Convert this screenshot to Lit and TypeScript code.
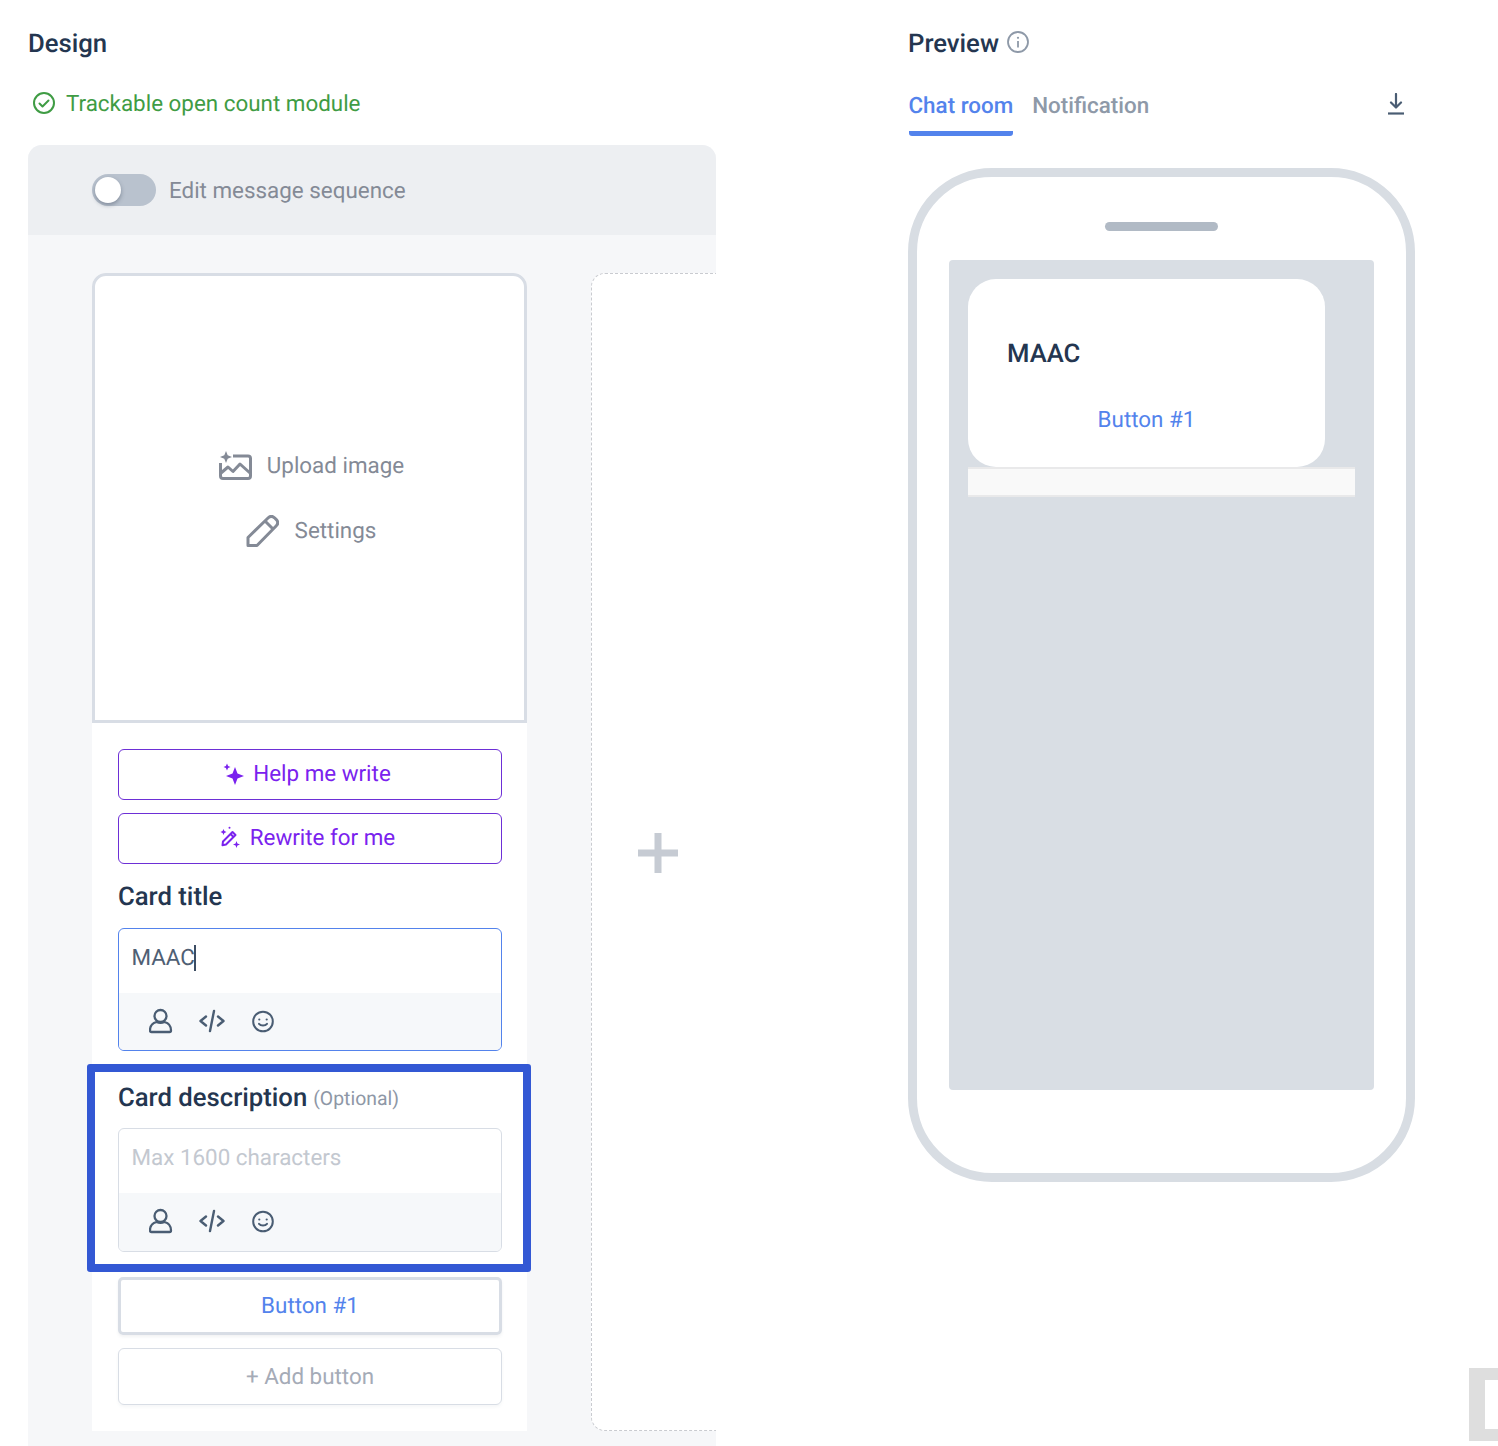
import { LitElement, html, css } from "lit";
import { customElement } from "lit/decorators.js";

const toolbar = html`<div class="toolbar">
  <svg width="24" height="26" viewBox="0 0 24 26" fill="none" stroke="#4a5d73" stroke-width="2.300" stroke-linejoin="round"><circle cx="11.500" cy="8" r="6"/><path d="M1 22.500c0-4 2.500-7.500 6.500-8.500 2.500 1 5.500 1 8 0 4 1 6.500 4.500 6.500 8.500 0 1-.5 1.500-1.500 1.500h-18c-1 0-1.500-.5-1.500-1.500z"/></svg>
  <svg width="26" height="24" viewBox="0 0 26 24" fill="none" stroke="#4a5d73" stroke-width="2.400" stroke-linecap="round" stroke-linejoin="round" class="code"><path d="M7 7.500L1.500 12 7 16.500M19 7.500l5.500 4.500-5.500 4.500M15 2L11 22"/></svg>
  <svg width="24" height="24" viewBox="0 0 24 24" fill="none" stroke="#4a5d73" stroke-width="2" stroke-linecap="round"><circle cx="12" cy="12.500" r="9.800"/><circle cx="8.300" cy="10.500" r="1.100" fill="#4a5d73" stroke="none"/><circle cx="15.700" cy="10.500" r="1.100" fill="#4a5d73" stroke="none"/><path d="M8 14.800c1.800 2.200 6.200 2.200 8 0"/></svg>
</div>`;

@customElement("app-root")
export class AppRoot extends LitElement {
  static styles = css`
    :host { display: block; font-family: Roboto, "Liberation Sans", sans-serif; text-rendering: geometricPrecision; }
    * { box-sizing: border-box; }
    .page { display: flex; width: 1498px; height: 1446px; overflow: hidden; position: relative; background: #fff; }
    .left { width: 688px; margin-left: 28px; flex: none; display: flex; flex-direction: column; }
    .right { width: 507px; margin-left: 192px; flex: none; }
    h2 { margin: 0; font-size: 25.700px; font-weight: 500; color: #243650; line-height: 34px; padding-top: 2px; }
    .heading { padding-top: 26px; display: flex; align-items: center; gap: 8px; height: 60px; }
    .status { margin-top: 27px; height: 32px; display: flex; align-items: center; gap: 11px; padding-left: 5px; color: #3f9c44; font-size: 22.400px; line-height: 34px; }
    .status span, .panel-head span { padding-top: 2px; }
    .panel { margin-top: 26px; flex: 1; display: flex; flex-direction: column; overflow: hidden; border-radius: 14px 14px 0 0; background: #f6f7f9; position: relative; }
    .panel-head { height: 90px; flex: none; background: #edeff2; display: flex; align-items: center; padding-left: 64px; gap: 13px; color: #848a96; font-size: 22.400px; }
    .toggle { width: 64px; height: 32px; border-radius: 16px; background: #b9c2ce; padding: 3px; display: flex; align-items: center; }
    .knob { width: 26px; height: 26px; border-radius: 50%; background: #fff; box-shadow: 0 2px 4px rgba(60,70,90,.45); }
    .panel-body { display: flex; padding: 38px 0 15px 64px; gap: 64px; flex: 1; }
    .card { width: 435px; flex: none; background: #fff; display: flex; flex-direction: column; border-radius: 14px 14px 0 0; }
    .image { height: 450px; flex: none; border: 3px solid #d8dde5; border-radius: 14px 14px 0 0; display: flex; flex-direction: column; align-items: center; justify-content: center; gap: 33px; color: #848a96; font-size: 22.400px; }
    .image-row { height: 32px; display: flex; align-items: center; gap: 15px; margin-left: 4px; }
    .image-row.settings { gap: 16px; margin-left: 3px; }
    .form { padding: 26px 25px 26px 26px; display: flex; flex-direction: column; }
    .ai { height: 51px; border: 1px solid #6d2fd6; border-radius: 6px; color: #7a22ee; display: flex; align-items: center; justify-content: center; gap: 9px; font-size: 22.400px; padding: 0 6px 2px 0; }
    .ai + .ai { margin-top: 13px; }
    .label { margin: 16px 0 16px; height: 32px; display: flex; align-items: center; gap: 6px; font-size: 25.700px; font-weight: 500; color: #243650; padding-top: 2px; }
    .label small { font-size: 19.400px; font-weight: 400; color: #8e97a6; }
    .editor { border: 1px solid #d8dde5; border-radius: 6px; overflow: hidden; display: flex; flex-direction: column; height: 124px; }
    .editor.active { border-color: #5383ec; height: 123px; }
    .text { height: 64px; flex: none; padding: 0 12.500px 6px; display: flex; align-items: center; font-size: 22.400px; }
    .active .text { color: #4f6074; }
    .caret { display: inline-block; width: 2px; height: 26px; background: #3c4d63; margin-left: -1px; }
    .placeholder { color: #c3c8d0; }
    .toolbar { flex: 1; background: #f6f8fa; display: flex; align-items: center; gap: 26px; padding: 0 0 2px 30px; }
    .title2 { margin-top: 30px; margin-bottom: 15px; }
    .btn { height: 58px; margin-top: 25px; border: 3px solid #d8dde5; border-radius: 5px; display: flex; align-items: center; justify-content: center; color: #5383ec; font-size: 22.400px; box-shadow: 0 2px 3px rgba(90,100,120,.08); }
    .add { height: 57px; margin-top: 13px; border: 1px solid #d8dde5; border-radius: 6px; display: flex; align-items: center; justify-content: center; color: #a5abb7; font-size: 22.400px; box-shadow: 0 2px 3px rgba(90,100,120,.06); }
    .next { width: 435px; flex: none; background: #fff; border: 1px dashed #c9cbd0; border-radius: 14px; display: flex; align-items: center; padding: 2px 0 0 46px; }
    .highlight { position: absolute; left: 87px; top: 1064px; width: 444px; height: 208px; border: 8px solid #3358d4; border-radius: 3px; }
    .tabs { margin-top: 29px; height: 46px; padding-left: 0.500px; display: flex; gap: 19px; font-size: 22.400px; font-weight: 500; color: #8e99a8; }
    .tab { height: 47px; padding-top: 2px; line-height: 31px; }
    .tab.on { color: #5383ec; border-bottom: 5px solid #5383ec; border-radius: 0 0 3px 3px; }
    .tools { margin-left: auto; margin-right: 10px; padding-top: 4px; }
    .phone { margin-top: 33px; width: 507px; height: 1014px; border: 9px solid #d8dde3; border-radius: 84px; display: flex; flex-direction: column; align-items: center; }
    .notch { width: 113px; height: 9px; border-radius: 5px; background: #b1bac5; margin-top: 45px; }
    .screen { width: 425px; height: 830px; margin-top: 29px; background: #d9dee4; border-radius: 4px; padding: 19px; display: flex; flex-direction: column; }
    .bubble { width: 357px; height: 188px; background: #fff; border-radius: 28px; display: flex; flex-direction: column; }
    .bubble b { font-size: 25.700px; font-weight: 500; color: #243650; margin: 59px 0 0 39px; line-height: 32px; }
    .bubble span { font-size: 22.400px; color: #5383ec; text-align: center; margin-top: 34px; line-height: 32px; }
    .strip { width: 387px; height: 30px; background: #f9f9f9; border-top: 2px solid #e9e9ea; border-bottom: 2px solid #e9e9ea; }
    .corner { position: absolute; left: 1469px; top: 1368px; width: 60px; height: 73px; border: solid #dedede; border-width: 12px 16px; }
  `;

  render() {
    return html`<div class="page">
      <div class="left">
        <div class="heading"><h2>Design</h2></div>
        <div class="status">
          <svg width="22" height="22" viewBox="0 0 22 22" fill="none" stroke="#3f9c44" stroke-width="2" stroke-linecap="round" stroke-linejoin="round"><circle cx="11" cy="11" r="10"/><path d="M6.500 11.500l3 3 6-6"/></svg>
          <span>Trackable open count module</span>
        </div>
        <div class="panel">
          <div class="panel-head"><div class="toggle"><div class="knob"></div></div><span>Edit message sequence</span></div>
          <div class="panel-body">
            <div class="card">
              <div class="image">
                <div class="image-row">
                  <svg width="33" height="29" viewBox="0 0 33 29" fill="none" stroke="#848a96" stroke-width="3" stroke-linejoin="round"><path d="M14 5h15c1.500 0 2.500 1 2.500 2.500v17.500c0 1.500-1 2.500-2.500 2.500H4c-1.500 0-2.500-1-2.500-2.500V12"/><path d="M2 22l7-6 5 4.500 7-7.500 10 9"/><path d="M7 0l1.700 4.300L13 6 8.700 7.700 7 12 5.300 7.700 1 6l4.300-1.700z" fill="#848a96" stroke="none"/></svg>
                  Upload image
                </div>
                <div class="image-row settings">
                  <svg width="33" height="32" viewBox="0 0 33 32" fill="none" stroke="#848a96" stroke-width="3" stroke-linejoin="round"><path d="M2 30.500v-8L22 3c2-2 4.500-2 6.500-.2l1.800 1.800c1.800 2 1.800 4.500-.2 6.400L11 30.500z"/><path d="M19 6l8.500 8.500"/></svg>
                  Settings
                </div>
              </div>
              <div class="form">
                <div class="ai">
                  <svg width="21" height="22" viewBox="0 0 21 22" fill="#7a22ee"><path d="M12 4l2.500 6.500L21 13l-6.500 2.500L12 22l-2.500-6.500L3 13l6.500-2.500z"/><path d="M4 .5l1.100 2.400L7.500 4 5.100 5.100 4 7.500 2.900 5.100.5 4l2.400-1.100z"/></svg>
                  Help me write
                </div>
                <div class="ai">
                  <svg width="22" height="23" viewBox="0 0 22 23" fill="none" stroke="#7a22ee" stroke-width="2" stroke-linejoin="round"><path d="M4 15.500L13.500 6l3 3-9.500 9.500-3.500.7z"/><path d="M11.500 8l3 3"/><path d="M4.500 3l.9 2.100 2.100.9-2.100.9-.9 2.100-.9-2.100L1.500 6l2.100-.9zM17.500 15l.9 2.600 2.600.9-2.600.9-.9 2.600-.9-2.600-2.600-.9 2.600-.9z" fill="#7a22ee" stroke="none"/><circle cx="10.500" cy="1.800" r="1" fill="#7a22ee" stroke="none"/></svg>
                  Rewrite for me
                </div>
                <div class="label">Card title</div>
                <div class="editor active">
                  <div class="text">MAAC<span class="caret"></span></div>
                  ${toolbar}
                </div>
                <div class="label title2">Card description <small>(Optional)</small></div>
                <div class="editor">
                  <div class="text placeholder">Max 1600 characters</div>
                  ${toolbar}
                </div>
                <div class="btn">Button #1</div>
                <div class="add">+ Add button</div>
              </div>
            </div>
            <div class="next">
              <svg width="40" height="40" viewBox="0 0 40 40" fill="#c6cbd3"><path d="M16.500 0h7v16.500H40v7H23.500V40h-7V23.500H0v-7h16.500z"/></svg>
            </div>
          </div>
        </div>
      </div>
      <div class="right">
        <div class="heading">
          <h2>Preview</h2>
          <svg width="22" height="22" viewBox="0 0 22 22" fill="none" stroke="#8e99a8" stroke-width="1.800" style="margin-top:-2px"><circle cx="11" cy="11" r="10"/><path d="M11 10v6.500"/><circle cx="11" cy="6.800" r="1.100" fill="#8e99a8" stroke="none"/></svg>
        </div>
        <div class="tabs">
          <div class="tab on">Chat room</div>
          <div class="tab">Notification</div>
          <div class="tools">
            <svg width="18" height="22" viewBox="0 0 18 22" fill="none" stroke="#4a5d73" stroke-width="2.200" stroke-linecap="round" stroke-linejoin="round"><path d="M9 1v13M4 9.500L9 14.500l5-5"/><path d="M1 20.500h16" stroke-linecap="butt"/></svg>
          </div>
        </div>
        <div class="phone">
          <div class="notch"></div>
          <div class="screen">
            <div class="bubble"><b>MAAC</b><span>Button #1</span></div>
            <div class="strip"></div>
          </div>
        </div>
      </div>
      <div class="highlight"></div>
      <div class="corner"></div>
    </div>`;
  }
}
